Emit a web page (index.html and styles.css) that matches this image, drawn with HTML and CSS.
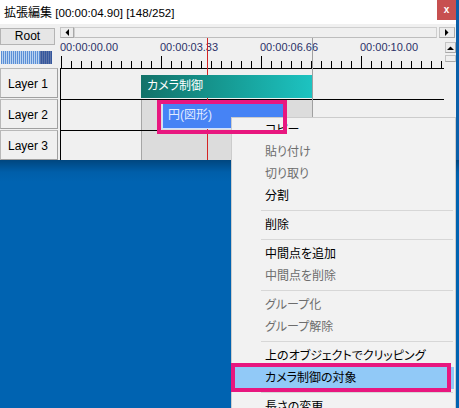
FILE: index.html
```html
<!DOCTYPE html>
<html lang="ja">
<head>
<meta charset="utf-8">
<title>拡張編集</title>
<link rel="stylesheet" href="styles.css">
</head>
<body>
<div class="window">
  <div class="titlebar">
    <div class="title"><span class="title-cjk">拡張編集</span><span class="title-lat"> [00:00:04.90] [148/252]</span></div>
    <div class="close">x</div>
  </div>
  <div class="main">
    <div class="left">
      <div class="root-btn">Root</div>
      <div class="vol"></div>
      <div class="layer-btns">
        <div class="layer-btn">Layer 1</div>
        <div class="layer-btn">Layer 2</div>
        <div class="layer-btn">Layer 3</div>
      </div>
    </div>
    <div class="right">
      <div class="hscroll">
        <div class="sb-btn sb-h"><svg width="4" height="7" viewBox="0 0 4 7"><polygon points="4,0 4,7 0.5,3.5" fill="#000"/></svg></div>
        <div class="sb-thumb"></div>
        <div class="sb-btn sb-r"><svg width="4" height="7" viewBox="0 0 4 7"><polygon points="0,0 0,7 3.5,3.5" fill="#000"/></svg></div>
      </div>
      <div class="tl-area">
        <div class="timeline">
          <div class="ruler">
            <div class="labels"><span>00:00:00.00</span><span>00:00:03.33</span><span>00:00:06.66</span><span>00:00:10.00</span></div>
            <div class="ticks"></div>
          </div>
          <div class="row">
            <div class="obj camera">カメラ制御</div>
          </div>
          <div class="row">
            <div class="range"></div>
            <div class="obj circle">円(図形)</div>
          </div>
          <div class="row last">
            <div class="range"></div>
          </div>
          <div class="endline"></div>
          <div class="cursor"></div>
        </div>
        <div class="vscroll">
          <div class="sb-btn sb-up"><svg width="7" height="4" viewBox="0 0 7 4"><polygon points="0,4 7,4 3.5,0.5" fill="#000"/></svg></div>
          <div class="sb-vthumb"></div>
        </div>
      </div>
    </div>
  </div>
</div>

<div class="menu">
  <div class="item">コピー</div>
  <div class="item off">貼り付け</div>
  <div class="item off">切り取り</div>
  <div class="item">分割</div>
  <div class="sep"></div>
  <div class="item">削除</div>
  <div class="sep"></div>
  <div class="item">中間点を追加</div>
  <div class="item off">中間点を削除</div>
  <div class="sep"></div>
  <div class="item off">グループ化</div>
  <div class="item off">グループ解除</div>
  <div class="sep"></div>
  <div class="item">上のオブジェクトでクリッピング</div>
  <div class="item hot">カメラ制御の対象</div>
  <div class="sep"></div>
  <div class="item">長さの変更</div>
</div>

<div class="mark mark-obj"></div>
<div class="mark mark-item"></div>
</body>
</html>
```

FILE: styles.css
```css
html, body {
  margin: 0;
  padding: 0;
}
body {
  width: 459px;
  height: 408px;
  overflow: hidden;
  position: relative;
  font-family: "Liberation Sans", "Noto Sans CJK JP", sans-serif;
  font-size: 12px;
  color: #000;
  background: linear-gradient(to bottom, #0a5fa9 0, #0a5fa9 160px, #00467f 160px, #005ea9 172px, #0063b1 182px, #0063b1 100%);
}

.window {
  width: 456px;
  height: 160px;
  background: #f0f0f0;
  display: flex;
  flex-direction: column;
  overflow: hidden;
}

/* title bar */
.titlebar {
  height: 24px;
  flex: none;
  background: #fff;
  display: flex;
  align-items: center;
  justify-content: space-between;
}
.title {
  padding-left: 4px;
  white-space: nowrap;
  line-height: 16px;
  margin-top: 2px;
}
.title-cjk {
  font-size: 12px;
}
.title-lat {
  font-size: 11.6px;
}
.close {
  align-self: flex-start;
  width: 19px;
  height: 20px;
  background: #c75050;
  color: #fff;
  font-weight: bold;
  font-size: 10px;
  line-height: 19px;
  text-align: center;
}

.main {
  flex: 1;
  display: flex;
  min-height: 0;
}

/* left column */
.left {
  width: 60px;
  flex: none;
  padding-top: 4px;
  display: flex;
  flex-direction: column;
}
.root-btn {
  width: 55px;
  height: 17px;
  box-sizing: border-box;
  border: 1px solid #b4b4b4;
  background: #e6e6e6;
  text-align: center;
  line-height: 15px;
  font-size: 12px;
}
.vol {
  margin-top: 6px;
  margin-left: 1px;
  width: 51px;
  height: 13px;
  background:
    linear-gradient(90deg, transparent 0 39px, rgba(20, 40, 110, 0.55) 39px 51px),
    repeating-linear-gradient(90deg, #5b8fd6 0 1px, #b9d2f0 1px 2px);
}
.layer-btns {
  margin-top: 4px;
  display: flex;
  flex-direction: column;
  gap: 1px;
}
.layer-btn {
  width: 58px;
  height: 30px;
  box-sizing: border-box;
  border: 1px solid #b8b8b8;
  border-right-color: #a0a0a0;
  border-bottom-color: #a0a0a0;
  background: #f0f0f0;
  padding-left: 7px;
  padding-top: 1px;
  line-height: 28px;
  font-size: 12px;
  white-space: pre;
}

/* right column */
.right {
  width: 396px;
  flex: none;
  display: flex;
  flex-direction: column;
}
.hscroll {
  margin-top: 3px;
  height: 11px;
  display: flex;
  flex: none;
}
.sb-btn {
  box-sizing: border-box;
  background: #ececec;
  border: 1px solid #c4c4c4;
  border-right-color: #a8a8a8;
  border-bottom-color: #a8a8a8;
  display: flex;
  align-items: center;
  justify-content: center;
}
.sb-h {
  width: 14px;
  justify-content: flex-start;
  padding-left: 4px;
}
.sb-thumb {
  width: 363px;
  box-sizing: border-box;
  background: #efefef;
  border: 1px solid #cfcfcf;
  border-bottom-color: #bdbdbd;
}
.sb-r {
  width: 16px;
  margin-left: 2px;
}

.tl-area {
  flex: 1;
  display: flex;
  min-height: 0;
}
.timeline {
  width: 384px;
  flex: none;
  position: relative;
  display: flex;
  flex-direction: column;
}
.ruler {
  height: 30px;
  flex: none;
  border-bottom: 1px solid #000;
  display: flex;
  flex-direction: column;
}
.labels {
  display: flex;
  padding-top: 3px;
  font-size: 11px;
  line-height: 13px;
  color: #2b3168;
}
.labels span {
  width: 100px;
  flex: none;
}
.ticks {
  margin-top: auto;
  height: 12px;
  background:
    repeating-linear-gradient(90deg, transparent 0 1px, #000 1px 2px, transparent 2px 10px) left bottom / 100% 7px no-repeat,
    repeating-linear-gradient(90deg, transparent 0 1px, #000 1px 2px, transparent 2px 100px) left bottom / 100% 12px no-repeat;
}
.row {
  position: relative;
  height: 30px;
  flex: none;
  border-left: 1px solid #000;
  border-bottom: 1px solid #000;
}
.row.last {
  border-bottom: none;
}
.range {
  position: absolute;
  left: 80px;
  top: 0;
  bottom: 0;
  width: 172px;
  box-sizing: border-box;
  background: #dcdcdc;
  border-left: 1px solid #a6a6a6;
  border-right: 1px solid #a6a6a6;
}
.obj {
  position: absolute;
  z-index: 2;
  box-sizing: border-box;
  white-space: nowrap;
  font-size: 12px;
  font-feature-settings: "palt" 1;
}
.camera {
  left: 80px;
  top: 6px;
  width: 171px;
  height: 23px;
  background: linear-gradient(90deg, #127269 0%, #169b94 50%, #1dc3c1 100%);
  color: #fff;
  padding-left: 6px;
  line-height: 22px;
}
.circle {
  left: 101px;
  top: 3px;
  width: 122px;
  height: 26px;
  background: #4683f5;
  border-left: 1px solid #cfe0ff;
  border-bottom: 1px solid #cfe0ff;
  color: #e2ecff;
  padding-left: 5px;
  line-height: 24px;
}
.cursor {
  position: absolute;
  z-index: 1;
  left: 147px;
  top: 0;
  bottom: 0;
  width: 1px;
  background: #d42424;
}
.endline {
  position: absolute;
  z-index: 1;
  left: 252px;
  top: 0;
  bottom: 0;
  width: 1px;
  background: #a0a0a0;
}

.vscroll {
  width: 12px;
  flex: none;
  display: flex;
  flex-direction: column;
  padding-left: 1px;
}
.sb-up {
  margin-top: 4px;
  width: 11px;
  height: 11px;
}
.sb-vthumb {
  margin-top: 2px;
  width: 11px;
  height: 7px;
  box-sizing: border-box;
  background: #efefef;
  border: 1px solid #c4c4c4;
  border-bottom-color: #a8a8a8;
}

/* context menu */
.menu {
  position: absolute;
  z-index: 5;
  left: 231px;
  top: 117px;
  width: 225px;
  height: 300px;
  box-sizing: border-box;
  background: #f2f2f2;
  border: 1px solid #cccccc;
  padding-top: 1px;
  font-family: "Liberation Sans", "Noto Sans CJK JP", sans-serif;
  font-size: 12px;
  font-feature-settings: "palt" 1;
}
.item {
  margin: 0 1px;
  height: 22px;
  line-height: 22px;
  padding-left: 32px;
  color: #000;
  white-space: nowrap;
}
.item.off {
  color: #6d6d6d;
}
.item.hot {
  background: #91c9f7;
}
.sep {
  height: 1px;
  margin: 3px 2px 3px 29px;
  background: #d7d7d7;
}

/* annotation marks */
.mark {
  position: absolute;
  z-index: 10;
  box-sizing: border-box;
  border: 4px solid #e8177f;
}
.mark-obj {
  left: 157px;
  top: 100px;
  width: 130px;
  height: 34px;
}
.mark-item {
  left: 231px;
  top: 363px;
  width: 220px;
  height: 29px;
}
```
